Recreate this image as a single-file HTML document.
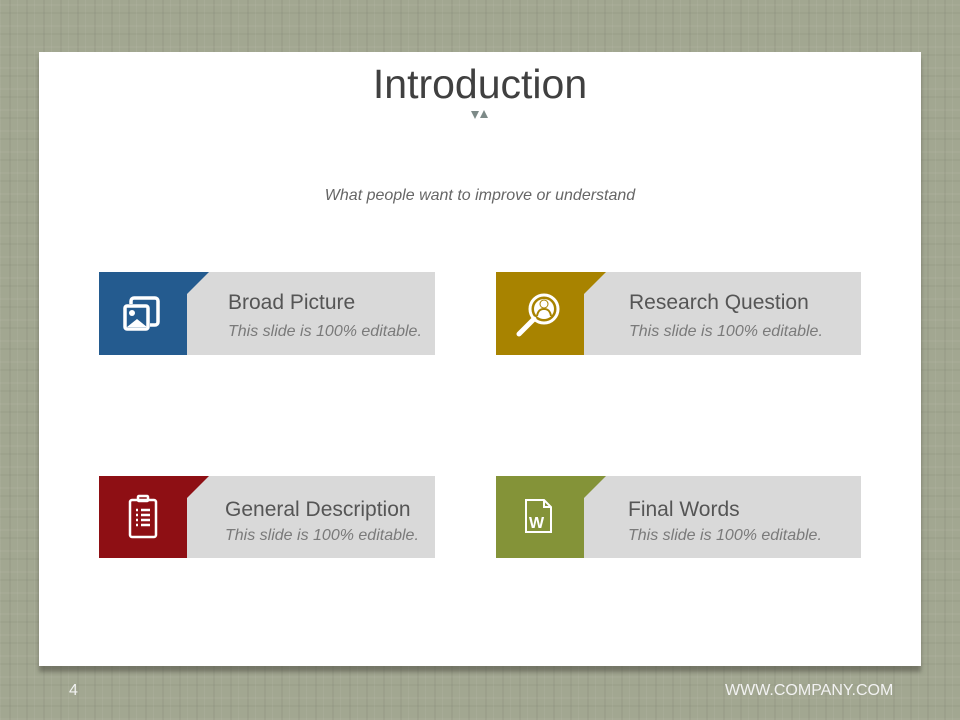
<!DOCTYPE html>
<html><head><meta charset="utf-8"><style>
*{margin:0;padding:0;box-sizing:border-box}
body{width:960px;height:720px;overflow:hidden;position:relative;font-family:"Liberation Sans",Arial,sans-serif;
background:#a2a791;
background-image:repeating-linear-gradient(90deg,rgba(255,255,255,.05) 0 1px,transparent 1px 9px,rgba(0,0,0,.04) 9px 11px,transparent 11px 17px),repeating-linear-gradient(0deg,rgba(255,255,255,.04) 0 2px,transparent 2px 13px,rgba(0,0,0,.03) 13px 15px,transparent 15px 21px);}
.abs{position:absolute}
.panel{left:39px;top:52px;width:882px;height:614px;background:#fff;box-shadow:0 6px 4px rgba(80,80,70,.55)}
h1{position:absolute;left:0;width:960px;top:61px;text-align:center;font-weight:normal;font-size:41px;color:#404040}
.sub{left:0;width:960px;top:187px;text-align:center;font-style:italic;font-size:16px;color:#666}
.card{position:absolute;height:83px;background:#d9d9d9}
.blk{position:absolute;left:0;top:0;width:88px;height:100%}
.tri{position:absolute;left:88px;top:0;width:0;height:0;border-top:22px solid;border-right:22px solid transparent}
.t{position:absolute;font-size:21px;color:#555}
.s{position:absolute;font-size:16px;font-style:italic;color:#7a7a7a}
.foot{color:#f2f2f2;font-size:16px;top:682px}
</style></head><body>
<div class="abs panel"></div>
<h1>Introduction</h1>
<svg class="abs" style="left:470px;top:109px" width="20" height="12"><polygon points="1,2 9,2 5,10" fill="#7d8a88"/><polygon points="10,9 18,9 14,1" fill="#7d8a88"/></svg>
<div class="abs sub">What people want to improve or understand</div>

<div class="card" style="left:99px;top:272px;width:336px">
 <div class="blk" style="background:#245b8f"></div><div class="tri" style="border-top-color:#245b8f"></div>
 <svg class="abs" style="left:22px;top:21px" width="42" height="42" viewBox="0 0 42 42"><rect x="10" y="5" width="27" height="27" rx="3" fill="none" stroke="#fff" stroke-width="3.5"/><rect x="2" y="11" width="27" height="27" rx="3" fill="#245b8f"/><rect x="4" y="13" width="23" height="23" rx="2" fill="none" stroke="#fff" stroke-width="3.5"/><circle cx="11" cy="20" r="3" fill="#fff"/><path d="M6 34l10-8 10 8z" fill="#fff"/></svg>
 <div class="t" style="left:129px;top:19px">Broad Picture</div>
 <div class="s" style="left:129px;top:51px">This slide is 100% editable.</div>
</div>

<div class="card" style="left:496px;top:272px;width:365px">
 <div class="blk" style="background:#a88300"></div><div class="tri" style="border-top-color:#a88300"></div>
 <svg class="abs" style="left:18px;top:18px" width="50" height="48" viewBox="0 0 50 48"><circle cx="30" cy="19" r="14" fill="none" stroke="#fff" stroke-width="3"/><circle cx="30" cy="19" r="10" fill="#fff"/><circle cx="30" cy="14" r="4.5" fill="#a88300"/><path d="M22 26c1-6 4-8 8-8s7 2 8 8z" fill="#a88300"/><circle cx="30" cy="14" r="3.5" fill="#fff"/><path d="M24 26c1-5 3-6 6-6s5 1 6 6z" fill="#fff"/><path d="M20 29L5 44" stroke="#fff" stroke-width="5" stroke-linecap="round"/></svg>
 <div class="t" style="left:133px;top:19px">Research Question</div>
 <div class="s" style="left:133px;top:51px">This slide is 100% editable.</div>
</div>

<div class="card" style="left:99px;top:476px;width:336px;height:82px">
 <div class="blk" style="background:#8e0f14"></div><div class="tri" style="border-top-color:#8e0f14"></div>
 <svg class="abs" style="left:28px;top:18px" width="32" height="46" viewBox="0 0 32 46" fill="none" stroke="#fff" stroke-width="2.5"><rect x="3" y="6" width="26" height="37" rx="2"/><rect x="11" y="2" width="10" height="5" rx="1"/><g stroke-width="2.5"><path d="M9 16h2M14 16h9M9 21h2M14 21h9M9 26h2M14 26h9M9 31h2M14 31h9"/></g></svg>
 <div class="t" style="left:126px;top:22px">General Description</div>
 <div class="s" style="left:126px;top:51px">This slide is 100% editable.</div>
</div>

<div class="card" style="left:496px;top:476px;width:365px;height:82px">
 <div class="blk" style="background:#849338"></div><div class="tri" style="border-top-color:#849338"></div>
 <svg class="abs" style="left:28px;top:22px" width="30" height="36" viewBox="0 0 30 36" fill="none" stroke="#fff" stroke-width="2"><path d="M2 2h18l7 7v25H2z"/><path d="M20 2v7h7"/><text x="5" y="30" font-family="Liberation Sans" font-weight="bold" font-size="16" fill="#fff" stroke="none">W</text></svg>
 <div class="t" style="left:132px;top:22px">Final Words</div>
 <div class="s" style="left:132px;top:51px">This slide is 100% editable.</div>
</div>

<div class="abs foot" style="left:69px">4</div>
<div class="abs foot" style="left:725px">WWW.COMPANY.COM</div>
</body></html>
